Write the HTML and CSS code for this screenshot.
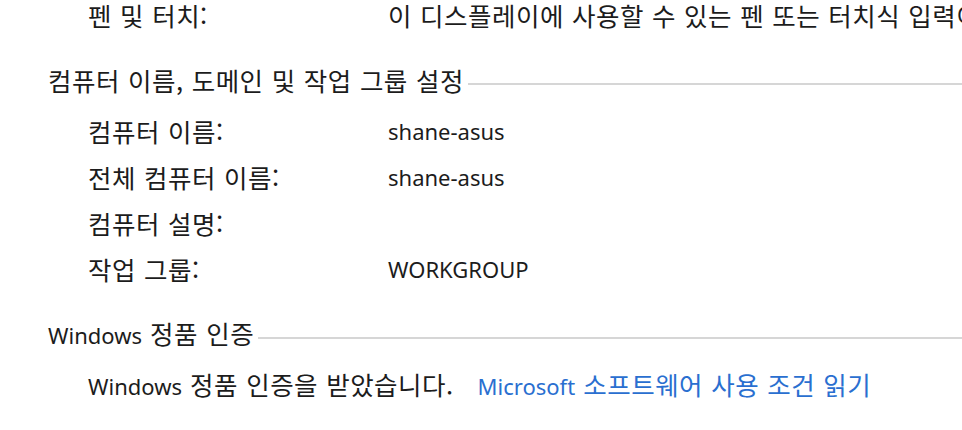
FILE: index.html
```html
<!DOCTYPE html>
<html lang="ko">
<head>
<meta charset="utf-8">
<link rel="stylesheet" href="styles.css">
</head>
<body>
<div class="page">
  <div class="rows">
    <div class="row"><span class="label">펜 및 터치:</span><span class="value">이 디스플레이에 사용할 수 있는 펜 또는 터치식 입력이 없습니다.</span></div>
  </div>

  <div class="heading"><span class="heading-text">컴퓨터 이름, 도메인 및 작업 그룹 설정</span><span class="rule"></span></div>
  <div class="rows">
    <div class="row"><span class="label">컴퓨터 이름:</span><span class="value en">shane-asus</span></div>
    <div class="row"><span class="label">전체 컴퓨터 이름:</span><span class="value en">shane-asus</span></div>
    <div class="row"><span class="label">컴퓨터 설명:</span><span class="value"></span></div>
    <div class="row"><span class="label">작업 그룹:</span><span class="value en">WORKGROUP</span></div>
  </div>

  <div class="heading"><span class="heading-text"><span class="en">Windows</span> 정품 인증</span><span class="rule"></span></div>
  <div class="rows">
    <div class="row"><span class="label wide"><span class="en">Windows</span> 정품 인증을 받았습니다.</span><a class="link" href="#"><span class="en">Microsoft</span> 소프트웨어 사용 조건 읽기</a></div>
  </div>
</div>
</body>
</html>
```

FILE: styles.css
```css
html, body {
  margin: 0;
  padding: 0;
  background: #ffffff;
}

body {
  font-family: "Noto Sans CJK KR", "Noto Sans", sans-serif;
  font-size: 25.5px;
  letter-spacing: 0.5px;
  word-spacing: 0.5px;
  color: #1c1c1c;
  overflow: hidden;
}

.en {
  font-family: "Noto Sans", "Noto Sans CJK KR", sans-serif;
  font-size: 22px;
  letter-spacing: 0;
}

.page {
  padding-left: 48px;
  width: 914px;
}

.rows {
  display: flex;
  flex-direction: column;
  gap: 16px;
  padding-left: 40px;
}

.row {
  display: flex;
  align-items: center;
  height: 30px;
  line-height: 30px;
  white-space: nowrap;
}

.label {
  width: 300px;
  flex: none;
}

.label.wide {
  width: auto;
  margin-right: 24px;
}

.value {
  flex: none;
}

.link {
  color: #2a6fd0;
  text-decoration: none;
}

.heading {
  display: flex;
  align-items: center;
  height: 30px;
  line-height: 30px;
  margin-top: 35px;
  margin-bottom: 21px;
  white-space: nowrap;
}

.heading-text {
  flex: none;
}

.rule {
  flex: 1;
  height: 2px;
  background: #d6d6d6;
  margin-left: 4px;
  margin-top: 8px;
}
```
